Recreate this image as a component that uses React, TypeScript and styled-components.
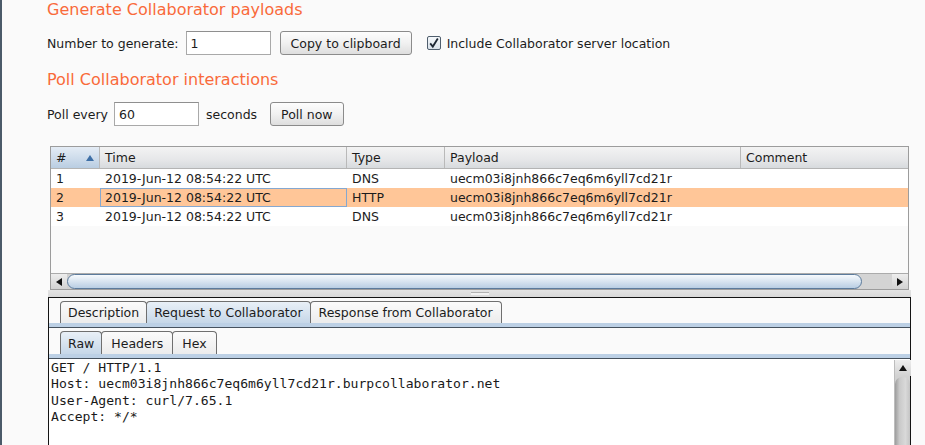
import React from "react"
import styled, { createGlobalStyle } from "styled-components"

const GlobalStyle = createGlobalStyle`
  html, body {
    margin: 0;
    padding: 0;
    background: #fafafa;
  }
  body {
    font-family: "DejaVu Sans", "Liberation Sans", sans-serif;
    font-size: 12.5px;
    color: #1c1c1c;
    overflow: hidden;
  }
`

const Page = styled.div`
  width: 925px;
  height: 445px;
  overflow: hidden;
  box-sizing: border-box;
  border-left: 2px solid #4b5a69;
  background: #fafafa;
`

const Options = styled.div`
  padding-left: 45px;
`

const Heading = styled.div<{ $top: number }>`
  margin-top: ${p => p.$top}px;
  font-size: 16px;
  line-height: 20px;
  color: #f96a3a;
`

const FieldRow = styled.div<{ $top: number }>`
  display: flex;
  align-items: center;
  height: 24px;
  margin-top: ${p => p.$top}px;
`

const Label = styled.span<{ $gap?: number }>`
  margin-left: ${p => p.$gap || 0}px;
  line-height: 15px;
  padding-top: 1px;
  white-space: nowrap;
`

const TextField = styled.div<{ $gap: number }>`
  margin-left: ${p => p.$gap}px;
  width: 85px;
  height: 24px;
  box-sizing: border-box;
  border: 1px solid #a9a9a9;
  border-top-color: #8f8f8f;
  background: #fff;
  padding-left: 4px;
  line-height: 23px;
`

const Button = styled.div<{ $gap: number }>`
  margin-left: ${p => p.$gap}px;
  height: 24px;
  box-sizing: border-box;
  padding: 0 10px;
  border: 1px solid #8b8b8b;
  border-radius: 3px;
  background: linear-gradient(#fdfdfd, #f1f1f1 50%, #dedede);
  line-height: 23px;
  white-space: nowrap;
`

const CheckBox = styled.div<{ $gap: number }>`
  margin-left: ${p => p.$gap}px;
  width: 14px;
  height: 14px;
  box-sizing: border-box;
  border: 1px solid #4f5e6d;
  border-radius: 2px;
  background: linear-gradient(#f4f7fa, #d9e2ea);
  display: flex;
  align-items: center;
  justify-content: center;
`

const columns = [49, 247, 98, 296, 167]
const gridCols = columns.map(c => `${c}px`).join(" ")

const TableBox = styled.div`
  margin: 20px 0 0 48px;
  width: 859px;
  height: 144px;
  box-sizing: border-box;
  border: 1px solid #9c9c9c;
  display: flex;
  flex-direction: column;
  background: #fafafa;
`

const HeaderRow = styled.div`
  display: grid;
  grid-template-columns: ${gridCols};
  height: 22px;
  background: linear-gradient(#f3f3f3, #e6e7e9 60%, #d7dadd);
  border-bottom: 1px solid #b4b4b4;
  box-sizing: border-box;
`

const HeaderCell = styled.div<{ $sorted?: boolean }>`
  display: flex;
  align-items: center;
  justify-content: space-between;
  padding: 0 5px;
  border-right: 1px solid #b9b9b9;
  line-height: 20px;
  background: ${p => (p.$sorted ? "linear-gradient(#e4ecf5, #cbdaea 60%, #b9cde2)" : "transparent")};
  &:last-child {
    border-right: none;
  }
`

const TableBody = styled.div`
  flex: 1;
`

const Row = styled.div<{ $selected?: boolean }>`
  display: grid;
  grid-template-columns: ${gridCols};
  height: 19px;
  line-height: 20px;
  background: ${p => (p.$selected ? "#ffc698" : "#fff")};
`

const Cell = styled.div<{ $focus?: boolean }>`
  padding-left: 5px;
  white-space: nowrap;
  overflow: hidden;
  box-shadow: ${p => (p.$focus ? "inset 0 0 0 1px #85a8d0" : "none")};
`

const HScroll = styled.div`
  height: 16px;
  display: flex;
  box-sizing: border-box;
  border-top: 1px solid #ababab;
  background: #d6d6d6;
`

const ArrowButton = styled.div<{ $h?: number }>`
  width: 16px;
  height: ${p => p.$h || 15}px;
  flex-shrink: 0;
  display: flex;
  align-items: center;
  justify-content: center;
  background: linear-gradient(#ededed, #d2d2d2);
`

const HTrack = styled.div`
  flex: 1;
  display: flex;
  background: linear-gradient(90deg, #d0d0d0, #c4c4c4 85%, #8e8e8e 92%, #d4d4d4 96%);
`

const HThumb = styled.div<{ $size: number }>`
  width: ${p => p.$size}px;
  box-sizing: border-box;
  border: 1px solid #5c7b9c;
  border-radius: 8px;
  background: linear-gradient(#f7fafd, #dbe6f1 45%, #b9cee3);
`

const Splitter = styled.div`
  margin-left: 46px;
  width: 863px;
  height: 7px;
  background: linear-gradient(#e4e4e4, #d9d9d9);
  display: flex;
  justify-content: center;
  padding-top: 2px;
  box-sizing: border-box;
`

const Grip = styled.div`
  width: 18px;
  height: 2px;
  border-top: 1px solid #b2b2b2;
  background: #f2f2f2;
`

const DetailPanel = styled.div`
  margin-left: 46px;
  width: 863px;
  height: 148px;
  box-sizing: border-box;
  border: 1px solid #141414;
  border-bottom: none;
  display: flex;
  flex-direction: column;
  background: #fafafa;
`

const TabStrip = styled.div<{ $top: number }>`
  display: flex;
  align-items: flex-end;
  padding: ${p => p.$top}px 0 0 11px;
  border-bottom: 4px solid #bcd0e5;
  box-shadow: 0 1px 0 #46525e;
  margin-bottom: 1px;
`

const Tab = styled.div<{ $active?: boolean; $pad: number; $h: number }>`
  height: ${p => p.$h}px;
  box-sizing: border-box;
  padding: 1px ${p => p.$pad}px 0;
  margin-right: -1px;
  border: 1px solid #6f6f6f;
  border-bottom: none;
  border-radius: 4px 4px 0 0;
  line-height: ${p => p.$h - 2}px;
  white-space: nowrap;
  background: ${p => (p.$active ? "linear-gradient(#e9f0f7, #c6d7e8)" : "linear-gradient(#fbfbfb, #ececec)")};
  position: relative;
  z-index: ${p => (p.$active ? 1 : 0)};
`

const Editor = styled.div`
  flex: 1;
  display: flex;
  background: #fff;
`

const Code = styled.pre`
  flex: 1;
  margin: 0;
  padding: 1px 0 0 2px;
  font-family: "DejaVu Sans Mono", "Liberation Mono", monospace;
  font-size: 13.1px;
  line-height: 16.4px;
  color: #1a1a1a;
`

const VScroll = styled.div`
  width: 15px;
  display: flex;
  flex-direction: column;
  background: #d2d2d2;
  border-left: 1px solid #bdbdbd;
  margin-top: 1px;
`

const VThumb = styled.div`
  flex: 1;
  margin-top: 1px;
  border-radius: 7px 7px 0 0;
  background: linear-gradient(90deg, #9d9d9d, #c9c9c9 30%, #d9d9d9 70%, #c4c4c4);
`

const Triangle = ({ dir, color = "#111" }: { dir: "up" | "left" | "right"; color?: string }) => {
  const pts = dir === "up" ? "0,6 4,0 8,6" : dir === "left" ? "6,0 0,4 6,8" : "0,0 6,4 0,8"
  const w = dir === "up" ? 8 : 6
  const h = dir === "up" ? 6 : 8
  return (
    <svg width={w} height={h} viewBox={`0 0 ${w} ${h}`}>
      <polygon points={pts} fill={color} />
    </svg>
  )
}

const rows = [
  { id: "1", time: "2019-Jun-12 08:54:22 UTC", type: "DNS", payload: "uecm03i8jnh866c7eq6m6yll7cd21r" },
  { id: "2", time: "2019-Jun-12 08:54:22 UTC", type: "HTTP", payload: "uecm03i8jnh866c7eq6m6yll7cd21r" },
  { id: "3", time: "2019-Jun-12 08:54:22 UTC", type: "DNS", payload: "uecm03i8jnh866c7eq6m6yll7cd21r" },
]

const request = `GET / HTTP/1.1
Host: uecm03i8jnh866c7eq6m6yll7cd21r.burpcollaborator.net
User-Agent: curl/7.65.1
Accept: */*`

const App = () => {
  const selected = "2"

  return (
    <Page>
      <GlobalStyle />
      <Options>
        <Heading $top={0}>Generate Collaborator payloads</Heading>
        <FieldRow $top={11}>
          <Label>Number to generate:</Label>
          <TextField $gap={7}>1</TextField>
          <Button $gap={9}>Copy to clipboard</Button>
          <CheckBox $gap={15}>
            <svg width="12" height="12" viewBox="0 0 12 12">
              <path d="M2.2 6.4 L4.8 9.6 L9.8 1.6" fill="none" stroke="#1d2733" strokeWidth="1.8" />
            </svg>
          </CheckBox>
          <Label $gap={6}>Include Collaborator server location</Label>
        </FieldRow>
        <Heading $top={15}>Poll Collaborator interactions</Heading>
        <FieldRow $top={12}>
          <Label>Poll every</Label>
          <TextField $gap={6}>60</TextField>
          <Label $gap={7}>seconds</Label>
          <Button $gap={13}>Poll now</Button>
        </FieldRow>
      </Options>

      <TableBox>
        <HeaderRow>
          <HeaderCell $sorted>
            <span>#</span>
            <Triangle dir="up" color="#3e6fa6" />
          </HeaderCell>
          <HeaderCell>Time</HeaderCell>
          <HeaderCell>Type</HeaderCell>
          <HeaderCell>Payload</HeaderCell>
          <HeaderCell>Comment</HeaderCell>
        </HeaderRow>
        <TableBody>
          {rows.map(r => (
            <Row key={r.id} $selected={r.id === selected}>
              <Cell>{r.id}</Cell>
              <Cell $focus={r.id === selected}>{r.time}</Cell>
              <Cell>{r.type}</Cell>
              <Cell>{r.payload}</Cell>
              <Cell />
            </Row>
          ))}
        </TableBody>
        <HScroll>
          <ArrowButton>
            <Triangle dir="left" />
          </ArrowButton>
          <HTrack>
            <HThumb $size={795} />
          </HTrack>
          <ArrowButton>
            <Triangle dir="right" />
          </ArrowButton>
        </HScroll>
      </TableBox>

      <Splitter>
        <Grip />
      </Splitter>

      <DetailPanel>
        <TabStrip $top={3}>
          <Tab $pad={7} $h={22}>Description</Tab>
          <Tab $pad={7} $h={22} $active>Request to Collaborator</Tab>
          <Tab $pad={8} $h={22}>Response from Collaborator</Tab>
        </TabStrip>
        <TabStrip $top={3}>
          <Tab $pad={7} $h={23} $active>Raw</Tab>
          <Tab $pad={9} $h={23}>Headers</Tab>
          <Tab $pad={9} $h={23}>Hex</Tab>
        </TabStrip>
        <Editor>
          <Code>{request}</Code>
          <VScroll>
            <ArrowButton $h={16}>
              <Triangle dir="up" />
            </ArrowButton>
            <VThumb />
          </VScroll>
        </Editor>
      </DetailPanel>
    </Page>
  )
}

export default App
